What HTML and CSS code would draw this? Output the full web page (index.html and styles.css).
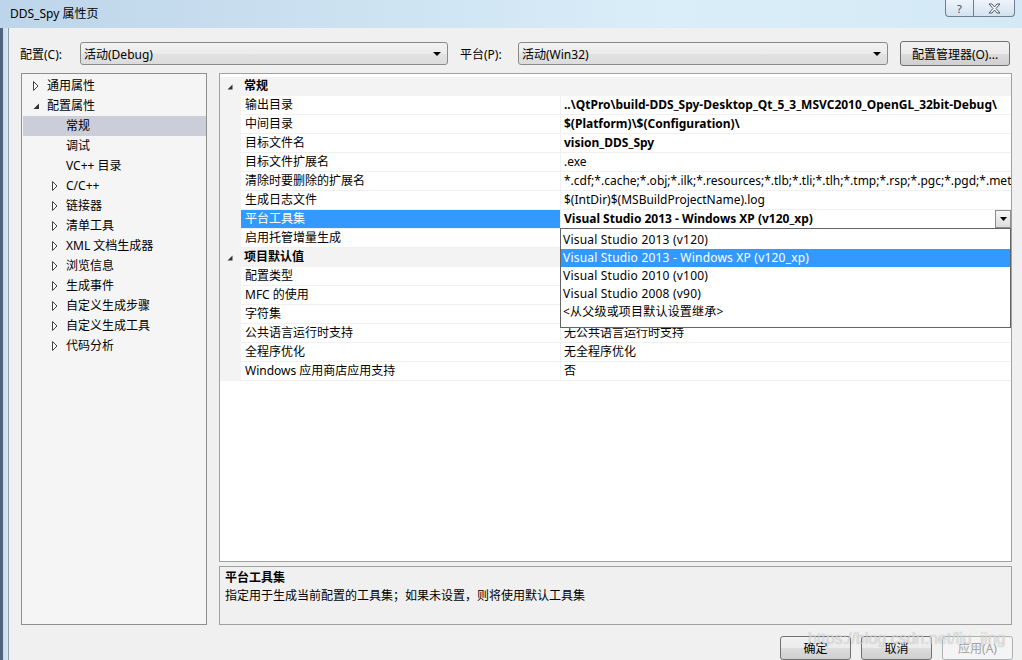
FILE: index.html
```html
<!DOCTYPE html>
<html lang="zh-CN">
<head>
    <meta charset="UTF-8">
    <title>DDS_Spy 属性页</title>
    <link rel="stylesheet" href="styles.css">
</head>
<body>
<div class="window">
    <div class="titlebar">
        <div class="title">DDS_Spy 属性页</div>
        <div class="caption">
            <div class="cap-btn cap-help">?</div>
            <div class="cap-btn cap-close">
                <svg width="13" height="11" viewBox="0 0 13 11"><path d="M1 1h3l2.5 3 2.5-3h3l-4 4.5 4 4.5h-3l-2.5-3-2.5 3h-3l4-4.5z" fill="#fff" stroke="#4a5868" stroke-width="1"/></svg>
            </div>
        </div>
    </div>
    <div class="frame">
        <div class="frame-side"></div>
        <div class="client">
            <div class="toolbar">
                <span class="tb-label">配置(C):</span>
                <div class="combo combo-config"><span>活动(Debug)</span><span class="combo-arrow"></span></div>
                <span class="tb-label tb-label-2">平台(P):</span>
                <div class="combo combo-platform"><span>活动(Win32)</span><span class="combo-arrow"></span></div>
                <button class="btn btn-manager">配置管理器(O)...</button>
            </div>

            <div class="main">
                <div class="tree">
                    <div class="tree-item lvl0"><span class="twisty"><svg width="6" height="10"><path d="M0.5 0.5L5 5 0.5 9.5z" fill="#fff" stroke="#404040"/></svg></span>通用属性</div>
                    <div class="tree-item lvl0"><span class="twisty"><svg width="7" height="7"><path d="M6 0.5V6H0.5z" fill="#333"/></svg></span>配置属性</div>
                    <div class="tree-item lvl1 selected"><span class="twisty"></span>常规</div>
                    <div class="tree-item lvl1"><span class="twisty"></span>调试</div>
                    <div class="tree-item lvl1"><span class="twisty"></span>VC++ 目录</div>
                    <div class="tree-item lvl1"><span class="twisty"><svg width="6" height="10"><path d="M0.5 0.5L5 5 0.5 9.5z" fill="#fff" stroke="#404040"/></svg></span>C/C++</div>
                    <div class="tree-item lvl1"><span class="twisty"><svg width="6" height="10"><path d="M0.5 0.5L5 5 0.5 9.5z" fill="#fff" stroke="#404040"/></svg></span>链接器</div>
                    <div class="tree-item lvl1"><span class="twisty"><svg width="6" height="10"><path d="M0.5 0.5L5 5 0.5 9.5z" fill="#fff" stroke="#404040"/></svg></span>清单工具</div>
                    <div class="tree-item lvl1"><span class="twisty"><svg width="6" height="10"><path d="M0.5 0.5L5 5 0.5 9.5z" fill="#fff" stroke="#404040"/></svg></span>XML 文档生成器</div>
                    <div class="tree-item lvl1"><span class="twisty"><svg width="6" height="10"><path d="M0.5 0.5L5 5 0.5 9.5z" fill="#fff" stroke="#404040"/></svg></span>浏览信息</div>
                    <div class="tree-item lvl1"><span class="twisty"><svg width="6" height="10"><path d="M0.5 0.5L5 5 0.5 9.5z" fill="#fff" stroke="#404040"/></svg></span>生成事件</div>
                    <div class="tree-item lvl1"><span class="twisty"><svg width="6" height="10"><path d="M0.5 0.5L5 5 0.5 9.5z" fill="#fff" stroke="#404040"/></svg></span>自定义生成步骤</div>
                    <div class="tree-item lvl1"><span class="twisty"><svg width="6" height="10"><path d="M0.5 0.5L5 5 0.5 9.5z" fill="#fff" stroke="#404040"/></svg></span>自定义生成工具</div>
                    <div class="tree-item lvl1"><span class="twisty"><svg width="6" height="10"><path d="M0.5 0.5L5 5 0.5 9.5z" fill="#fff" stroke="#404040"/></svg></span>代码分析</div>
                </div>

                <div class="props">
                    <div class="grid">
                        <div class="row cat">
                            <div class="gutter"><svg width="6" height="6"><path d="M5.5 0.5V5.5H0.5z" fill="#333"/></svg></div>
                            <div class="cat-name">常规</div>
                        </div>
                        <div class="row">
                            <div class="gutter"></div>
                            <div class="name">输出目录</div>
                            <div class="value bold">..\QtPro\build-DDS_Spy-Desktop_Qt_5_3_MSVC2010_OpenGL_32bit-Debug\</div>
                        </div>
                        <div class="row">
                            <div class="gutter"></div>
                            <div class="name">中间目录</div>
                            <div class="value bold">$(Platform)\$(Configuration)\</div>
                        </div>
                        <div class="row">
                            <div class="gutter"></div>
                            <div class="name">目标文件名</div>
                            <div class="value bold">vision_DDS_Spy</div>
                        </div>
                        <div class="row">
                            <div class="gutter"></div>
                            <div class="name">目标文件扩展名</div>
                            <div class="value">.exe</div>
                        </div>
                        <div class="row">
                            <div class="gutter"></div>
                            <div class="name">清除时要删除的扩展名</div>
                            <div class="value">*.cdf;*.cache;*.obj;*.ilk;*.resources;*.tlb;*.tli;*.tlh;*.tmp;*.rsp;*.pgc;*.pgd;*.meta;*.</div>
                        </div>
                        <div class="row">
                            <div class="gutter"></div>
                            <div class="name">生成日志文件</div>
                            <div class="value">$(IntDir)$(MSBuildProjectName).log</div>
                        </div>
                        <div class="row active">
                            <div class="gutter"></div>
                            <div class="name">平台工具集</div>
                            <div class="value bold editing">
                                Visual Studio 2013 - Windows XP (v120_xp)
                                <span class="drop-btn"><svg width="7" height="4"><path d="M0 0h7L3.5 4z" fill="#000"/></svg></span>
                                <div class="droplist">
                                    <div class="drop-item">Visual Studio 2013 (v120)</div>
                                    <div class="drop-item current">Visual Studio 2013 - Windows XP (v120_xp)</div>
                                    <div class="drop-item">Visual Studio 2010 (v100)</div>
                                    <div class="drop-item">Visual Studio 2008 (v90)</div>
                                    <div class="drop-item">&lt;从父级或项目默认设置继承&gt;</div>
                                </div>
                            </div>
                        </div>
                        <div class="row">
                            <div class="gutter"></div>
                            <div class="name">启用托管增量生成</div>
                            <div class="value"></div>
                        </div>
                        <div class="row cat">
                            <div class="gutter"><svg width="6" height="6"><path d="M5.5 0.5V5.5H0.5z" fill="#333"/></svg></div>
                            <div class="cat-name">项目默认值</div>
                        </div>
                        <div class="row">
                            <div class="gutter"></div>
                            <div class="name">配置类型</div>
                            <div class="value"></div>
                        </div>
                        <div class="row">
                            <div class="gutter"></div>
                            <div class="name">MFC 的使用</div>
                            <div class="value"></div>
                        </div>
                        <div class="row">
                            <div class="gutter"></div>
                            <div class="name">字符集</div>
                            <div class="value"></div>
                        </div>
                        <div class="row">
                            <div class="gutter"></div>
                            <div class="name">公共语言运行时支持</div>
                            <div class="value">无公共语言运行时支持</div>
                        </div>
                        <div class="row">
                            <div class="gutter"></div>
                            <div class="name">全程序优化</div>
                            <div class="value">无全程序优化</div>
                        </div>
                        <div class="row">
                            <div class="gutter"></div>
                            <div class="name">Windows 应用商店应用支持</div>
                            <div class="value">否</div>
                        </div>
                    </div>
                    <div class="desc">
                        <div class="desc-title">平台工具集</div>
                        <div>指定用于生成当前配置的工具集；如果未设置，则将使用默认工具集</div>
                    </div>
                </div>
            </div>

            <div class="buttons">
                <button class="btn">确定</button>
                <button class="btn">取消</button>
                <button class="btn" disabled>应用(A)</button>
            </div>
        </div>
    </div>
    <div class="watermark">https://blog.csdn.net/liu_jing</div>
</div>
</body>
</html>
```

FILE: styles.css
```css
* {
    box-sizing: border-box;
}
body {
    margin: 0;
    width: 1022px;
    height: 660px;
    overflow: hidden;
    font-family: "Noto Sans", "Noto Sans CJK SC", sans-serif;
    font-size: 12px;
    color: #000;
    background: #c8dcee;
}
.window {
    position: relative;
    display: flex;
    flex-direction: column;
    height: 660px;
}
.titlebar {
    height: 28px;
    display: flex;
    justify-content: space-between;
    align-items: flex-start;
    background: linear-gradient(90deg, #bdd5ea 0%, #cde2f1 35%, #d9eef8 65%, #d3e9f5 100%);
}
.title {
    padding: 6px 0 0 10px;
    line-height: 16px;
    font-size: 12px;
}
.caption {
    display: flex;
    margin-right: 7px;
}
.cap-btn {
    height: 17px;
    border: 1px solid #6f7e8e;
    border-top: none;
    background: linear-gradient(#eef4fa, #d3e2ef);
    display: flex;
    align-items: center;
    justify-content: center;
    color: #3c4a58;
    font-size: 11px;
}
.cap-help {
    width: 29px;
    border-radius: 0 0 0 4px;
}
.cap-close {
    width: 41px;
    border-left: none;
    border-radius: 0 0 4px 0;
}
.frame {
    flex: 1;
    display: flex;
    min-height: 0;
}
.frame-side {
    width: 9px;
    background: linear-gradient(90deg, #51637c 0, #51637c 3px, #c7dbec 3px, #d8e8f4 8px, #8d9cad 8px);
}
.client {
    flex: 1;
    min-width: 0;
    display: flex;
    flex-direction: column;
    background: #f0f0f0;
}
.toolbar {
    display: flex;
    align-items: center;
    height: 25px;
    margin-top: 13px;
    padding-left: 11px;
}
.tb-label {
    width: 60px;
}
.tb-label-2 {
    width: 58px;
    margin-left: 12px;
}
.combo {
    position: relative;
    height: 23px;
    display: flex;
    align-items: center;
    padding-left: 3px;
    border: 1px solid #8a8a8a;
    border-radius: 3px;
    background: linear-gradient(#f2f2f2 0%, #ebebeb 50%, #e2e2e2 51%, #dcdcdc 100%);
}
.combo-config {
    width: 368px;
}
.combo-platform {
    width: 370px;
}
.combo-arrow {
    position: absolute;
    right: 6px;
    top: 9px;
    border-left: 4px solid transparent;
    border-right: 4px solid transparent;
    border-top: 4px solid #000;
}
.btn {
    height: 24px;
    width: 71px;
    padding: 0;
    font-family: "Noto Sans", "Noto Sans CJK SC", sans-serif;
    font-size: 12px;
    color: #000;
    border: 1px solid #707070;
    border-radius: 3px;
    background: linear-gradient(#f2f2f2 0%, #ebebeb 50%, #dddddd 51%, #cfcfcf 100%);
}
.btn:disabled {
    color: #a0a0a0;
    border-color: #adb2b5;
    background: #f4f4f4;
}
.btn-manager {
    width: 110px;
    height: 25px;
    margin-left: 12px;
}
.main {
    display: flex;
    gap: 12px;
    height: 552px;
    margin-top: 7px;
    padding: 0 10px 0 12px;
}
.tree {
    width: 186px;
    flex-shrink: 0;
    border: 1px solid #8e8f8f;
    background: #f5f5f5;
    padding-top: 2px;
}
.tree-item {
    display: flex;
    align-items: center;
    height: 20px;
    line-height: 20px;
    white-space: nowrap;
}
.tree-item.lvl0 {
    padding-left: 11px;
}
.tree-item.lvl1 {
    padding-left: 30px;
}
.tree-item.selected {
    background: #cbcdd9;
    margin: 0 0 0 1px;
    padding-left: 29px;
}
.twisty {
    width: 14px;
    display: flex;
    align-items: center;
}
.props {
    flex: 1;
    min-width: 0;
    display: flex;
    flex-direction: column;
    gap: 4px;
}
.grid {
    flex: 1;
    border: 1px solid #a0a0a0;
    background: #fff;
    padding-top: 3px;
}
.row {
    display: flex;
    height: 19px;
    line-height: 18px;
    white-space: nowrap;
}
.gutter {
    width: 21px;
    flex-shrink: 0;
    background: #f3f3f3;
    display: flex;
    align-items: center;
    justify-content: center;
    padding-right: 2px;
}
.cat {
    background: #f3f3f3;
}
.cat-name {
    padding-left: 3px;
    font-weight: bold;
}
.name {
    width: 320px;
    flex-shrink: 0;
    padding-left: 4px;
    border-bottom: 1px solid #f0f0f0;
    border-right: 1px solid #f0f0f0;
    overflow: hidden;
}
.value {
    flex: 1;
    min-width: 0;
    padding-left: 3px;
    border-bottom: 1px solid #f0f0f0;
    overflow: hidden;
}
.bold {
    font-weight: bold;
}
.active .name {
    background: #3399ff;
    color: #fff;
}
.value.editing {
    position: relative;
    overflow: visible;
}
.drop-btn {
    position: absolute;
    right: 0;
    top: 0;
    width: 16px;
    height: 18px;
    border: 1px solid #8c8c8c;
    background: linear-gradient(#f6f6f6, #dcdcdc);
    display: flex;
    align-items: center;
    justify-content: center;
}
.droplist {
    position: absolute;
    left: -1px;
    top: 18px;
    right: 0;
    height: 100px;
    padding-top: 2px;
    border: 1px solid #646464;
    background: #fff;
    font-weight: normal;
    letter-spacing: 0.2px;
    z-index: 2;
}
.drop-item {
    height: 18px;
    line-height: 18px;
    padding-left: 2px;
}
.drop-item.current {
    background: #3399ff;
    color: #fff;
}
.desc {
    height: 59px;
    border: 1px solid #a0a0a0;
    background: #f0f0f0;
    padding: 2px 5px;
    line-height: 18px;
}
.desc-title {
    font-weight: bold;
}
.buttons {
    display: flex;
    justify-content: flex-end;
    gap: 10px;
    margin-top: 11px;
    padding-right: 9px;
}
.watermark {
    position: absolute;
    left: 808px;
    top: 630px;
    font-family: "Liberation Sans", sans-serif;
    font-size: 16px;
    color: rgba(255, 255, 255, 0.55);
    text-shadow: 0 0 1px rgba(120, 120, 120, 0.6);
    pointer-events: none;
}
```
